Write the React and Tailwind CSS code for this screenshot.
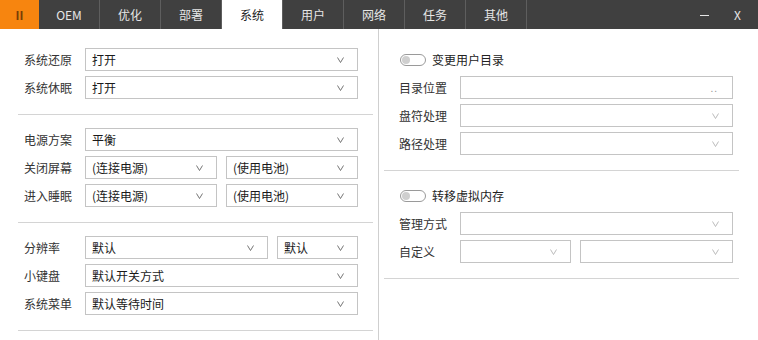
import React from 'react';

const font = { fontFamily: '"Noto Sans CJK SC", "Noto Sans", sans-serif' };

const tabs = ['OEM', '优化', '部署', '系统', '用户', '网络', '任务', '其他'];

const Chevron = ({ light }) => (
  <svg width="7" height="6" viewBox="0 0 7 6" className="shrink-0">
    <polyline points="0.5,0.5 3.5,5.5 6.5,0.5" fill="none" stroke={light ? '#b4b4b4' : '#666'} strokeWidth="0.9" />
  </svg>
);

const Select = ({ value, className = 'flex-1', light }) => (
  <div className={`${className} h-[23px] border border-[#c4c4c4] bg-white flex items-center pl-[6px] pr-[13px]`}>
    <span className="flex-1 text-[12px] text-[#1a1a1a] leading-[16px] whitespace-nowrap">{value}</span>
    <Chevron light={light} />
  </div>
);

const Row = ({ label, children }) => (
  <div className="flex items-center h-[23px]">
    <div className="w-[61px] shrink-0 text-[12px] text-[#333] leading-[16px]">{label}</div>
    <div className="flex-1 flex gap-[9px]">{children}</div>
  </div>
);

const Toggle = ({ label }) => (
  <div className="flex items-center h-[23px] pl-px">
    <div className="w-[26px] h-[12px] rounded-full border border-[#9a9a9a] flex items-center px-[1px]">
      <div className="w-[8px] h-[8px] rounded-full bg-[#cfcfcf]" />
    </div>
    <span className="ml-[6px] text-[12px] text-[#222] leading-[16px]">{label}</span>
  </div>
);

const Section = ({ first, children, right }) => (
  <div
    className={`${first ? 'pt-[19px]' : 'pt-[13px]'} pb-[15px] border-b border-[#d4d4d4] flex flex-col gap-[5px] ${
      right ? 'ml-[5px] w-[355px] pl-[15px] pr-[6px]' : 'ml-[18px] w-[355px] pl-[6px] pr-[15px]'
    }`}
  >
    {children}
  </div>
);

export default function App() {
  return (
    <div className="w-[758px] h-[340px] bg-white flex flex-col overflow-hidden" style={font}>
      <div className="h-[29px] bg-[#404040] flex items-stretch shrink-0">
        <div className="w-[39px] bg-[#f7850f] flex items-center justify-center text-[12px] text-[#7a3d06] font-semibold">II</div>
        {tabs.map((t) => (
          <div
            key={t}
            className={`w-[61px] flex items-center justify-center text-[12px] border-r border-[#5e5e5e] ${
              t === '系统' ? 'bg-white text-[#222]' : 'text-[#e6e6e6]'
            }`}
          >
            {t}
          </div>
        ))}
        <div className="flex-1" />
        <div className="w-[40px] flex items-center justify-center">
          <div className="w-[9px] h-px bg-[#e6e6e6] mt-px" />
        </div>
        <div className="w-[34px] flex items-center justify-start pl-[10px] text-[12px] text-[#e6e6e6]">X</div>
      </div>

      <div className="flex flex-1">
        <div className="w-[379px] border-r border-[#cfcfcf] shrink-0">
          <Section first>
            <Row label="系统还原"><Select value="打开" /></Row>
            <Row label="系统休眠"><Select value="打开" /></Row>
          </Section>
          <Section>
            <Row label="电源方案"><Select value="平衡" /></Row>
            <Row label="关闭屏幕">
              <Select value="(连接电源)" />
              <Select value="(使用电池)" />
            </Row>
            <Row label="进入睡眠">
              <Select value="(连接电源)" />
              <Select value="(使用电池)" />
            </Row>
          </Section>
          <Section>
            <Row label="分辨率">
              <Select value="默认" />
              <Select value="默认" className="w-[81px] shrink-0" />
            </Row>
            <Row label="小键盘"><Select value="默认开关方式" /></Row>
            <Row label="系统菜单"><Select value="默认等待时间" /></Row>
          </Section>
        </div>

        <div className="flex-1">
          <Section first right>
            <Toggle label="变更用户目录" />
            <Row label="目录位置">
              <div className="flex-1 h-[23px] border border-[#c4c4c4] flex items-center justify-end pr-[14px]">
                <span className="text-[10px] text-[#999] leading-[12px] tracking-[1px]">..</span>
              </div>
            </Row>
            <Row label="盘符处理"><Select value="" light /></Row>
            <Row label="路径处理"><Select value="" light /></Row>
          </Section>
          <Section right>
            <Toggle label="转移虚拟内存" />
            <Row label="管理方式"><Select value="" light /></Row>
            <Row label="自定义">
              <Select value="" light className="w-[111px] shrink-0" />
              <Select value="" light />
            </Row>
          </Section>
        </div>
      </div>
    </div>
  );
}
